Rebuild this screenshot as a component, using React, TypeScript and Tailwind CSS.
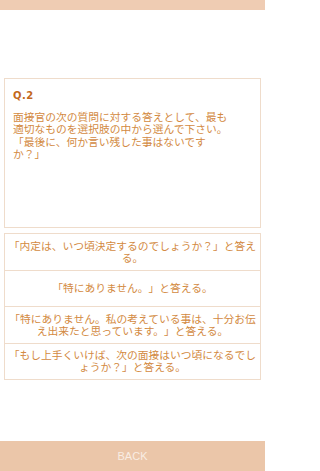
const answers: string[][] = [
  ["「内定は、いつ頃決定するのでしょうか？」と答え", "る。"],
  ["「特にありません。」と答える。"],
  ["「特にありません。私の考えている事は、十分お伝", "え出来たと思っています。」と答える。"],
  ["「もし上手くいけば、次の面接はいつ頃になるでし", "ょうか？」と答える。"],
];

const jp = { fontFamily: '"Noto Sans CJK JP", "Noto Sans", sans-serif' };

export default function App() {
  return (
    <div className="w-[265px] min-h-screen flex flex-col bg-white [text-spacing-trim:space-all]" style={jp}>
      <div className="h-[10px] bg-[#efccb3]" />

      <section className="mt-[68px] mx-[4px] h-[150px] border border-[#efdccb] px-[8px] pt-[10px]">
        <div
          className="text-[10px] leading-[14px] font-bold text-[#c3681c] tracking-[0.5px]"
          style={{ fontFamily: '"DejaVu Sans", "Liberation Sans", sans-serif' }}
        >
          Q.2
        </div>
        <p className="mt-[8px] text-[10.75px] leading-[12.3px] text-[#d38a42] whitespace-nowrap">
          面接官の次の質問に対する答えとして、最も
          <br />
          適切なものを選択肢の中から選んで下さい。
          <br />
          「最後に、何か言い残した事はないです
          <br />
          か？」
        </p>
      </section>

      <section className="mt-[5px] mx-[4px] border-t border-x border-[#efdccb]">
        {answers.map((lines, i) => (
          <div
            key={i}
            className="h-[36.5px] border-b border-[#efdccb] flex flex-col items-center justify-center text-center text-[10.75px] leading-[12px] text-[#d38a42]"
          >
            {lines.map((l, j) => (
              <span key={j} className="whitespace-nowrap">{l}</span>
            ))}
          </div>
        ))}
      </section>

      <button
        className="mt-auto h-[30px] bg-[#ebc6a9] text-[#f9ede3] text-[11px] flex items-center justify-center"
        style={{ fontFamily: '"Liberation Sans", Arial, sans-serif' }}
      >
        BACK
      </button>
    </div>
  );
}
